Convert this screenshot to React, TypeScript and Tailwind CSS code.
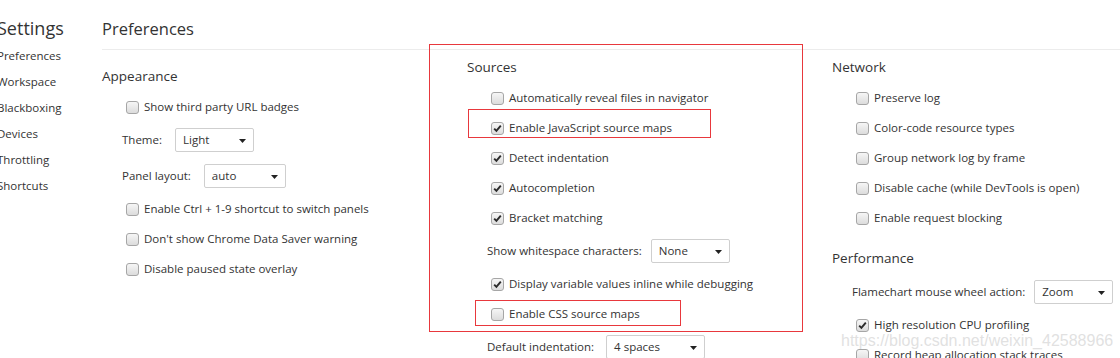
import React from "react";

const font = { fontFamily: '"Open Sans", "Noto Sans", Arial, sans-serif' };

function Box({ checked }: { checked?: boolean }) {
  return (
    <span className="relative inline-flex h-[13px] w-[13px] shrink-0 items-center justify-center rounded-[3px] border border-[#a6a6a6] bg-gradient-to-b from-[#f6f6f6] to-[#dcdcdc]">
      {checked && (
        <svg width="9" height="9" viewBox="0 0 9 9" className="block">
          <path d="M1.2 4.6 L3.4 6.9 L7.8 1.6" fill="none" stroke="#2b2b2b" strokeWidth="1.9" />
        </svg>
      )}
    </span>
  );
}

function Check({ label, checked }: { label: string; checked?: boolean }) {
  return (
    <div className="flex h-[30px] items-center gap-[5px] pl-[24px] pt-[2px]">
      <Box checked={checked} />
      <span className="whitespace-nowrap">{label}</span>
    </div>
  );
}

function Select({ label, value, w, gap }: { label: string; value: string; w: string; gap: string }) {
  return (
    <div className="flex h-[36px] items-center pl-[20px] pt-[1px]">
      <span className={`whitespace-nowrap ${gap}`}>{label}</span>
      <div className={`relative flex h-[24px] items-center rounded-[2px] border border-[#cfcfcf] bg-white pl-[7px] ${w}`}>
        <span>{value}</span>
        <svg width="7" height="4" viewBox="0 0 7 4" className="absolute right-[7px] top-[10px]">
          <path d="M0 0 H7 L3.5 4 Z" fill="#222" />
        </svg>
      </div>
    </div>
  );
}

function Heading({ children }: { children: React.ReactNode }) {
  return <div className="flex h-[30px] items-center text-[13.5px] text-[#333]">{children}</div>;
}

export default function App() {
  return (
    <div className="relative h-[358px] w-[1120px] overflow-hidden bg-white text-[11.5px] text-[#333]" style={font}>
      <div className="flex">
        <aside className="w-[102px] shrink-0 -ml-[3px]">
          <div className="h-[43px] pt-[15px] text-[18px] leading-[26px] text-[#333]">Settings</div>
          {["Preferences", "Workspace", "Blackboxing", "Devices", "Throttling", "Shortcuts"].map((t) => (
            <div key={t} className="h-[26px] leading-[26px] text-[#333]">
              {t}
            </div>
          ))}
        </aside>
        <main className="flex-1 ml-[3px]">
          <div className="h-[50px] border-b border-[#ececec] pt-[16px] text-[16.5px] leading-[26px] text-[#333]">
            Preferences
          </div>
          <div className="grid grid-cols-[365px_365px_1fr]">
            <div className="pt-[11px]">
              <Heading>Appearance</Heading>
              <Check label="Show third party URL badges" />
              <Select label="Theme:" value="Light" w="w-[79px]" gap="mr-[13px]" />
              <Select label="Panel layout:" value="auto" w="w-[82px]" gap="mr-[13px]" />
              <Check label="Enable Ctrl + 1-9 shortcut to switch panels" />
              <Check label="Don't show Chrome Data Saver warning" />
              <Check label="Disable paused state overlay" />
            </div>
            <div className="pt-[2px]">
              <Heading>Sources</Heading>
              <Check label="Automatically reveal files in navigator" />
              <Check label="Enable JavaScript source maps" checked />
              <Check label="Detect indentation" checked />
              <Check label="Autocompletion" checked />
              <Check label="Bracket matching" checked />
              <Select label="Show whitespace characters:" value="None" w="w-[79px]" gap="mr-[9px]" />
              <Check label="Display variable values inline while debugging" checked />
              <Check label="Enable CSS source maps" />
              <Select label="Default indentation:" value="4 spaces" w="w-[99px]" gap="mr-[12px]" />
            </div>
            <div className="pt-[2px]">
              <Heading>Network</Heading>
              <Check label="Preserve log" />
              <Check label="Color-code resource types" />
              <Check label="Group network log by frame" />
              <Check label="Disable cache (while DevTools is open)" />
              <Check label="Enable request blocking" />
              <div className="mt-[11px]">
                <Heading>Performance</Heading>
              </div>
              <Select label="Flamechart mouse wheel action:" value="Zoom" w="w-[79px]" gap="mr-[9px]" />
              <Check label="High resolution CPU profiling" checked />
              <Check label="Record heap allocation stack traces" />
            </div>
          </div>
        </main>
      </div>

      {/* annotation boxes */}
      <div className="pointer-events-none absolute left-[429px] top-[44px] h-[288px] w-[374px] border border-[#e8383d]" />
      <div className="pointer-events-none absolute left-[468px] top-[109px] h-[29px] w-[243px] border border-[#e8383d]" />
      <div className="pointer-events-none absolute left-[475px] top-[300px] h-[26px] w-[206px] border border-[#e8383d]" />

      {/* watermark */}
      <div
        className="pointer-events-none absolute left-[841px] top-[331px] whitespace-nowrap text-[16px] leading-[20px] text-[#d9d9d9]/80"
        style={{ fontFamily: '"Liberation Sans", Arial, sans-serif' }}
      >
        https://blog.csdn.net/weixin_42588966
      </div>
    </div>
  );
}
